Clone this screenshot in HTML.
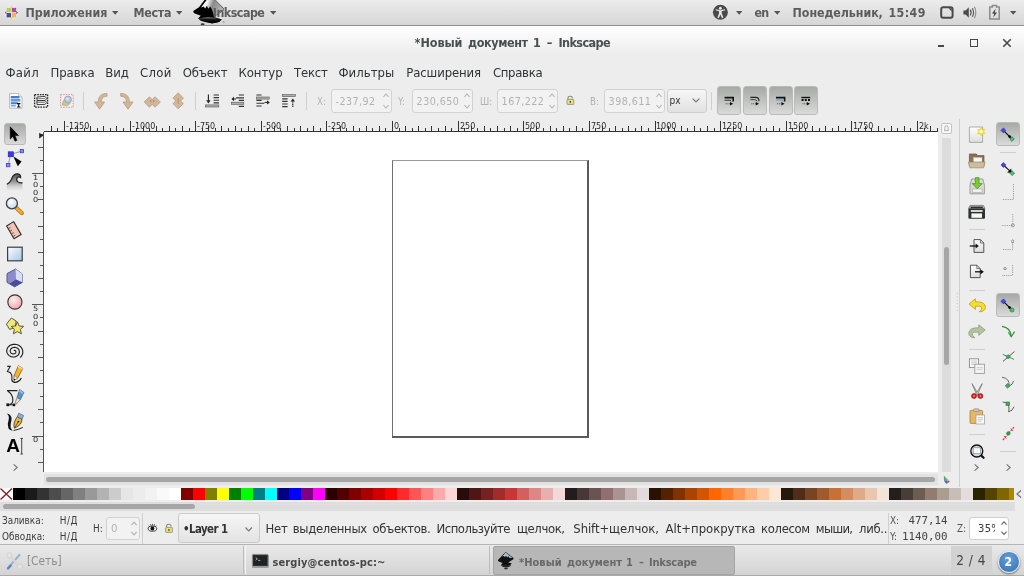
<!DOCTYPE html><html><head><meta charset="utf-8"><title>Inkscape</title><style>
*{box-sizing:border-box;margin:0;padding:0}
html,body{width:1024px;height:576px;overflow:hidden;background:#ededed;font-family:"DejaVu Sans Condensed","DejaVu Sans","Liberation Sans",sans-serif;font-size:13px;color:#2e3436}
.a{position:absolute}
.t{position:absolute;white-space:nowrap;line-height:1}
#panel{left:0;top:0;width:1024px;height:26px;background:linear-gradient(#ececec,#d6d6d6);border-bottom:1px solid #8e8e8e}
.pt{z-index:3;font-weight:bold;font-size:12.35px;color:#5c5c5c}
#title{left:0;top:26px;width:1024px;height:28px;background:linear-gradient(#ffffff,#ededed)}
.mi{font-size:13px;color:#2e3436;top:65.7px}
.sp{position:absolute;border:1px solid #d2d2d2;border-radius:3px;background:#f2f2f2;height:24px;top:89px}
.dim{color:#b2b2b2}
.tb{position:absolute;border-radius:3px;border:1px solid #b9bbb9;background:linear-gradient(#a6a9a6,#d9dad9)}
.sep{position:absolute;background:#cfcfcf}
.rl{position:absolute;font-family:"DejaVu Sans",sans-serif;font-size:8px;line-height:1;color:#2a2a2a;white-space:nowrap}
.sm{font-size:9.9px;color:#3c3c3c}
.mono{font-family:"DejaVu Sans Mono","Liberation Mono",monospace;font-size:10.8px;color:#444}
svg{position:absolute;overflow:visible}
</style></head><body><div id="root" style="position:absolute;left:0;top:0;width:1024px;height:576px;will-change:transform;filter:blur(0.4px)">
<div id="panel" class="a">
<div class="t pt" style="left:25.4px;top:7px">Приложения</div>
<svg style="left:111.6px;top:11px" width="6.4" height="3.8" viewBox="0 0 6.4 3.8"><path d="M0 0H6.4L3.2 3.8Z" fill="#555"/></svg>
<div class="t pt" style="left:133.5px;top:7px;letter-spacing:-0.3px">Места</div>
<svg style="left:176px;top:11px" width="6.4" height="3.8" viewBox="0 0 6.4 3.8"><path d="M0 0H6.4L3.2 3.8Z" fill="#555"/></svg>
<div class="t pt" style="left:212.8px;top:7px;letter-spacing:-0.5px">Inkscape</div>
<svg style="left:270.3px;top:11px" width="6.4" height="3.8" viewBox="0 0 6.4 3.8"><path d="M0 0H6.4L3.2 3.8Z" fill="#555"/></svg>
<div class="t pt" style="left:754.6px;top:7px;letter-spacing:-0.9px">en</div>
<svg style="left:736px;top:11px" width="6.4" height="3.8" viewBox="0 0 6.4 3.8"><path d="M0 0H6.4L3.2 3.8Z" fill="#555"/></svg>
<svg style="left:773.5px;top:11px" width="6.4" height="3.8" viewBox="0 0 6.4 3.8"><path d="M0 0H6.4L3.2 3.8Z" fill="#555"/></svg>
<svg style="left:1010px;top:11px" width="6.4" height="3.8" viewBox="0 0 6.4 3.8"><path d="M0 0H6.4L3.2 3.8Z" fill="#555"/></svg>
<div class="a pt" style="left:0;top:7px;width:1024px;height:16px;line-height:1"><span class="t" style="left:792.6px;top:0;letter-spacing:-0.07px">Понедельник,</span> <span class="t" style="left:888.4px;top:0;letter-spacing:0.43px">15:49</span></div>
</div>
<div id="title" class="a"></div>
<div class="a" style="left:0;top:37.4px;width:1024px;height:16px;font-weight:bold;font-size:12.5px;color:#46504f;line-height:1"><span class="t" style="left:414.6px;top:0;letter-spacing:-0.06px">*Новый</span> <span class="t" style="left:468px;top:0;letter-spacing:-0.41px">документ</span> <span class="t" style="left:533.1px;top:0;letter-spacing:0px">1</span> <span class="t" style="left:546.7px;top:0;letter-spacing:0px">–</span> <span class="t" style="left:558.5px;top:0;letter-spacing:-0.6px">Inkscape</span></div>
<div class="a" style="left:938px;top:45px;width:6px;height:2px;background:#3f4a4a"></div>
<div class="a" style="left:970px;top:39px;width:8px;height:8px;border:1.5px solid #3f4a4a"></div>
<svg style="left:1003px;top:39px" width="8" height="8" viewBox="0 0 8 8"><path d="M0.3 0.3L7.7 7.7M7.7 0.3L0.3 7.7" stroke="#3f4a4a" stroke-width="1.6" fill="none"/></svg>
<div class="t mi" style="left:5.5px;letter-spacing:0.3px">Файл</div>
<div class="t mi" style="left:50.6px;letter-spacing:-0.1px">Правка</div>
<div class="t mi" style="left:105.3px;letter-spacing:-0.1px">Вид</div>
<div class="t mi" style="left:140px;letter-spacing:0.3px">Слой</div>
<div class="t mi" style="left:182.7px;letter-spacing:-0.2px">Объект</div>
<div class="t mi" style="left:238.4px;letter-spacing:0px">Контур</div>
<div class="t mi" style="left:294px;letter-spacing:-0.2px">Текст</div>
<div class="t mi" style="left:338.4px;letter-spacing:0.05px">Фильтры</div>
<div class="t mi" style="left:406.2px;letter-spacing:-0.1px">Расширения</div>
<div class="t mi" style="left:492.9px;letter-spacing:-0.3px">Справка</div>
<div class="sep" style="left:83px;top:92px;width:1px;height:18px"></div>
<div class="sep" style="left:194.5px;top:92px;width:1px;height:18px"></div>
<div class="sep" style="left:305.6px;top:92px;width:1px;height:18px"></div>
<div class="sep" style="left:711px;top:92px;width:1px;height:18px"></div>
<div class="t dim" style="left:317px;top:97px;font-size:9.6px">X:</div>
<div class="sp" style="left:331px;width:61px;top:89px;height:24px;background:#f2f2f2"><div class="t" style="left:3.6px;top:6.6px;font-size:9.6px;color:#b2b2b2;font-family:'DejaVu Sans',sans-serif;letter-spacing:0.43px">-237,92</div><svg style="left:51.4px;top:0" width="6" height="24" viewBox="0 0 6 24"><path d="M0.4 7.0L3 4.0L5.6 7.0M0.4 15.000000000000002L3 18.0L5.6 15.000000000000002" stroke="#b2b2b2" stroke-width="1.1" fill="none"/></svg></div>
<div class="t dim" style="left:398px;top:97px;font-size:9.6px">Y:</div>
<div class="sp" style="left:412px;width:61px;top:89px;height:24px;background:#f2f2f2"><div class="t" style="left:3.6px;top:6.6px;font-size:9.6px;color:#b2b2b2;font-family:'DejaVu Sans',sans-serif;letter-spacing:0.43px">230,650</div><svg style="left:51.4px;top:0" width="6" height="24" viewBox="0 0 6 24"><path d="M0.4 7.0L3 4.0L5.6 7.0M0.4 15.000000000000002L3 18.0L5.6 15.000000000000002" stroke="#b2b2b2" stroke-width="1.1" fill="none"/></svg></div>
<div class="t dim" style="left:480px;top:97px;font-size:9.6px">Ш:</div>
<div class="sp" style="left:497px;width:61px;top:89px;height:24px;background:#f2f2f2"><div class="t" style="left:3.6px;top:6.6px;font-size:9.6px;color:#b2b2b2;font-family:'DejaVu Sans',sans-serif;letter-spacing:0.43px">167,222</div><svg style="left:51.4px;top:0" width="6" height="24" viewBox="0 0 6 24"><path d="M0.4 7.0L3 4.0L5.6 7.0M0.4 15.000000000000002L3 18.0L5.6 15.000000000000002" stroke="#b2b2b2" stroke-width="1.1" fill="none"/></svg></div>
<div class="t dim" style="left:590px;top:97px;font-size:9.6px">В:</div>
<div class="sp" style="left:604px;width:61px;top:89px;height:24px;background:#f2f2f2"><div class="t" style="left:3.6px;top:6.6px;font-size:9.6px;color:#b2b2b2;font-family:'DejaVu Sans',sans-serif;letter-spacing:0.43px">398,611</div><svg style="left:51.4px;top:0" width="6" height="24" viewBox="0 0 6 24"><path d="M0.4 7.0L3 4.0L5.6 7.0M0.4 15.000000000000002L3 18.0L5.6 15.000000000000002" stroke="#b2b2b2" stroke-width="1.1" fill="none"/></svg></div>
<div class="a" style="left:667px;top:89px;width:40px;height:24px;border:1px solid #cfcfcf;border-radius:3px;background:linear-gradient(#f6f6f6,#e2e2e2)"></div>
<div class="t" style="left:669.6px;top:96px;font-size:10px;color:#333">px</div>
<svg style="left:692px;top:98px" width="8" height="5" viewBox="0 0 8 5"><path d="M0.6 0.6L4 4L7.4 0.6" stroke="#777" stroke-width="1.2" fill="none"/></svg>
<div class="tb" style="left:717px;top:86px;width:24px;height:29px"></div>
<div class="tb" style="left:743px;top:86px;width:24px;height:29px"></div>
<div class="tb" style="left:769px;top:86px;width:24px;height:29px"></div>
<div class="tb" style="left:794px;top:86px;width:24px;height:29px"></div>
<div class="a" style="left:44px;top:132px;width:894px;height:340px;background:#fff"></div>
<div class="a" style="left:44px;top:131px;width:894px;height:1px;background:#333"></div>
<div class="a" style="left:43px;top:132px;width:1px;height:340px;background:#555"></div>
<svg style="left:0;top:0" width="1024" height="576" viewBox="0 0 1024 576" shape-rendering="crispEdges"><path d="M51.5 126V131M57.5 128V131M64.5 121V131M70.5 128V131M77.5 126V131M84.5 128V131M90.5 126V131M97.5 128V131M103.5 126V131M110.5 128V131M116.5 126V131M123.5 128V131M130.5 121V131M136.5 128V131M143.5 126V131M149.5 128V131M156.5 126V131M162.5 128V131M169.5 126V131M175.5 128V131M182.5 126V131M189.5 128V131M195.5 121V131M202.5 128V131M208.5 126V131M215.5 128V131M221.5 126V131M228.5 128V131M235.5 126V131M241.5 128V131M248.5 126V131M254.5 128V131M261.5 121V131M267.5 128V131M274.5 126V131M280.5 128V131M287.5 126V131M294.5 128V131M300.5 126V131M307.5 128V131M313.5 126V131M320.5 128V131M326.5 121V131M333.5 128V131M340.5 126V131M346.5 128V131M353.5 126V131M359.5 128V131M366.5 126V131M372.5 128V131M379.5 126V131M385.5 128V131M392.5 121V131M399.5 128V131M405.5 126V131M412.5 128V131M418.5 126V131M425.5 128V131M431.5 126V131M438.5 128V131M445.5 126V131M451.5 128V131M458.5 121V131M464.5 128V131M471.5 126V131M477.5 128V131M484.5 126V131M490.5 128V131M497.5 126V131M504.5 128V131M510.5 126V131M517.5 128V131M523.5 121V131M530.5 128V131M536.5 126V131M543.5 128V131M550.5 126V131M556.5 128V131M563.5 126V131M569.5 128V131M576.5 126V131M582.5 128V131M589.5 121V131M595.5 128V131M602.5 126V131M609.5 128V131M615.5 126V131M622.5 128V131M628.5 126V131M635.5 128V131M641.5 126V131M648.5 128V131M655.5 121V131M661.5 128V131M668.5 126V131M674.5 128V131M681.5 126V131M687.5 128V131M694.5 126V131M700.5 128V131M707.5 126V131M714.5 128V131M720.5 121V131M727.5 128V131M733.5 126V131M740.5 128V131M746.5 126V131M753.5 128V131M760.5 126V131M766.5 128V131M773.5 126V131M779.5 128V131M786.5 121V131M792.5 128V131M799.5 126V131M805.5 128V131M812.5 126V131M819.5 128V131M825.5 126V131M832.5 128V131M838.5 126V131M845.5 128V131M851.5 121V131M858.5 128V131M865.5 126V131M871.5 128V131M878.5 126V131M884.5 128V131M891.5 126V131M897.5 128V131M904.5 126V131M910.5 128V131M917.5 121V131M924.5 128V131M930.5 126V131M937.5 128V131" stroke="#333" stroke-width="1" fill="none"/><path d="M38 462.5H43M40 449.5H43M32 436.5H43M40 422.5H43M38 409.5H43M40 396.5H43M38 383.5H43M40 370.5H43M38 357.5H43M40 344.5H43M38 331.5H43M40 317.5H43M32 304.5H43M40 291.5H43M38 278.5H43M40 265.5H43M38 252.5H43M40 239.5H43M38 226.5H43M40 212.5H43M38 199.5H43M40 186.5H43M32 173.5H43M40 160.5H43M38 147.5H43M40 134.5H43" stroke="#555" stroke-width="1" fill="none"/></svg>
<div class="rl" style="left:66px;top:122.7px">-1250</div>
<div class="rl" style="left:132px;top:122.7px">-1000</div>
<div class="rl" style="left:197px;top:122.7px">-750</div>
<div class="rl" style="left:263px;top:122.7px">-500</div>
<div class="rl" style="left:328px;top:122.7px">-250</div>
<div class="rl" style="left:394px;top:122.7px">0</div>
<div class="rl" style="left:460px;top:122.7px">250</div>
<div class="rl" style="left:525px;top:122.7px">500</div>
<div class="rl" style="left:591px;top:122.7px">750</div>
<div class="rl" style="left:656px;top:122.7px">1000</div>
<div class="rl" style="left:722px;top:122.7px">1250</div>
<div class="rl" style="left:788px;top:122.7px">1500</div>
<div class="rl" style="left:853px;top:122.7px">1750</div>
<div class="rl" style="left:919px;top:122.7px">2k</div>
<div class="rl" style="left:33px;top:173.9px;font-size:7.2px;transform:scaleX(1.14);transform-origin:0 0">1</div>
<div class="rl" style="left:33px;top:181.3px;font-size:7.2px;transform:scaleX(1.14);transform-origin:0 0">0</div>
<div class="rl" style="left:33px;top:188.7px;font-size:7.2px;transform:scaleX(1.14);transform-origin:0 0">0</div>
<div class="rl" style="left:33px;top:196.1px;font-size:7.2px;transform:scaleX(1.14);transform-origin:0 0">0</div>
<div class="rl" style="left:33px;top:305.1px;font-size:7.2px;transform:scaleX(1.14);transform-origin:0 0">5</div>
<div class="rl" style="left:33px;top:312.5px;font-size:7.2px;transform:scaleX(1.14);transform-origin:0 0">0</div>
<div class="rl" style="left:33px;top:319.9px;font-size:7.2px;transform:scaleX(1.14);transform-origin:0 0">0</div>
<div class="rl" style="left:33px;top:436.4px;font-size:7.2px;transform:scaleX(1.14);transform-origin:0 0">0</div>
<div class="a" style="left:392px;top:160px;width:197px;height:278px;border-style:solid;border-width:1px 2px 2px 1px;border-color:#9a9a9a #5a5a5a #5a5a5a #6e6e6e"></div>
<div class="a" style="left:942px;top:138px;width:9px;height:334px;background:#dcdcdc"></div>
<div class="a" style="left:944px;top:247px;width:5px;height:118px;background:#a6a6a6;border-radius:2.5px"></div>
<div class="a" style="left:44px;top:474px;width:894px;height:11px;background:#e2e2e2"></div>
<div class="a" style="left:46px;top:477px;width:889px;height:5px;background:#a6a6a6;border-radius:2.5px"></div>
<div class="a" style="left:941px;top:123px;width:11px;height:11px;border:1px solid #c2c2c2;border-radius:2px;background:#f8f8f8"></div>
<div class="sep" style="left:959px;top:119px;width:1px;height:368px"></div>
<div class="tb" style="left:4px;top:123px;width:22px;height:22px"></div>
<div class="tb" style="left:996px;top:122px;width:24px;height:24px"></div>
<div class="tb" style="left:996px;top:293px;width:24px;height:24px"></div>
<div class="sep" style="left:969px;top:229px;width:16px;height:1px"></div>
<div class="sep" style="left:969px;top:290px;width:16px;height:1px"></div>
<div class="sep" style="left:969px;top:349px;width:16px;height:1px"></div>
<div class="sep" style="left:969px;top:434px;width:16px;height:1px"></div>
<div class="sep" style="left:1000px;top:152px;width:16px;height:1px"></div>
<div class="sep" style="left:1000px;top:451px;width:16px;height:1px"></div>
<svg style="left:12.5px;top:464px" width="5" height="7" viewBox="0 0 5 7"><path d="M0.6 0.4L4.2 3.5L0.6 6.6" stroke="#777" stroke-width="1.2" fill="none"/></svg>
<svg style="left:974px;top:464px" width="5" height="7" viewBox="0 0 5 7"><path d="M0.6 0.4L4.2 3.5L0.6 6.6" stroke="#777" stroke-width="1.2" fill="none"/></svg>
<svg style="left:1006px;top:464px" width="5" height="7" viewBox="0 0 5 7"><path d="M0.6 0.4L4.2 3.5L0.6 6.6" stroke="#777" stroke-width="1.2" fill="none"/></svg>
<div class="a" style="left:0;top:488px;width:1014px;height:12px;overflow:hidden;background:#fff">
<svg style="left:0;top:0" width="13" height="12" viewBox="0 0 13 12"><path d="M0.5 0.5L12 11.5M12 0.5L0.5 11.5" stroke="#8b1a1a" stroke-width="1.3" fill="none"/></svg>
<div class="a" style="left:13px;top:0;width:12px;height:12px;background:#000000"></div>
<div class="a" style="left:25px;top:0;width:12px;height:12px;background:#1a1a1a"></div>
<div class="a" style="left:37px;top:0;width:12px;height:12px;background:#333333"></div>
<div class="a" style="left:49px;top:0;width:12px;height:12px;background:#4d4d4d"></div>
<div class="a" style="left:61px;top:0;width:12px;height:12px;background:#666666"></div>
<div class="a" style="left:73px;top:0;width:12px;height:12px;background:#808080"></div>
<div class="a" style="left:85px;top:0;width:12px;height:12px;background:#999999"></div>
<div class="a" style="left:97px;top:0;width:12px;height:12px;background:#b3b3b3"></div>
<div class="a" style="left:109px;top:0;width:12px;height:12px;background:#cccccc"></div>
<div class="a" style="left:121px;top:0;width:12px;height:12px;background:#e6e6e6"></div>
<div class="a" style="left:133px;top:0;width:12px;height:12px;background:#ececec"></div>
<div class="a" style="left:145px;top:0;width:12px;height:12px;background:#f2f2f2"></div>
<div class="a" style="left:157px;top:0;width:12px;height:12px;background:#f9f9f9"></div>
<div class="a" style="left:169px;top:0;width:12px;height:12px;background:#ffffff"></div>
<div class="a" style="left:181px;top:0;width:12px;height:12px;background:#800000"></div>
<div class="a" style="left:193px;top:0;width:12px;height:12px;background:#ff0000"></div>
<div class="a" style="left:205px;top:0;width:12px;height:12px;background:#808000"></div>
<div class="a" style="left:217px;top:0;width:12px;height:12px;background:#ffff00"></div>
<div class="a" style="left:229px;top:0;width:12px;height:12px;background:#008000"></div>
<div class="a" style="left:241px;top:0;width:12px;height:12px;background:#00ff00"></div>
<div class="a" style="left:253px;top:0;width:12px;height:12px;background:#008080"></div>
<div class="a" style="left:265px;top:0;width:12px;height:12px;background:#00ffff"></div>
<div class="a" style="left:277px;top:0;width:12px;height:12px;background:#000080"></div>
<div class="a" style="left:289px;top:0;width:12px;height:12px;background:#0000ff"></div>
<div class="a" style="left:301px;top:0;width:12px;height:12px;background:#800080"></div>
<div class="a" style="left:313px;top:0;width:12px;height:12px;background:#ff00ff"></div>
<div class="a" style="left:325px;top:0;width:12px;height:12px;background:#2b0000"></div>
<div class="a" style="left:337px;top:0;width:12px;height:12px;background:#550000"></div>
<div class="a" style="left:349px;top:0;width:12px;height:12px;background:#800000"></div>
<div class="a" style="left:361px;top:0;width:12px;height:12px;background:#aa0000"></div>
<div class="a" style="left:373px;top:0;width:12px;height:12px;background:#d40000"></div>
<div class="a" style="left:385px;top:0;width:12px;height:12px;background:#ff0000"></div>
<div class="a" style="left:397px;top:0;width:12px;height:12px;background:#ff2a2a"></div>
<div class="a" style="left:409px;top:0;width:12px;height:12px;background:#ff5555"></div>
<div class="a" style="left:421px;top:0;width:12px;height:12px;background:#ff8080"></div>
<div class="a" style="left:433px;top:0;width:12px;height:12px;background:#ffaaaa"></div>
<div class="a" style="left:445px;top:0;width:12px;height:12px;background:#ffd5d5"></div>
<div class="a" style="left:457px;top:0;width:12px;height:12px;background:#280b0b"></div>
<div class="a" style="left:469px;top:0;width:12px;height:12px;background:#501616"></div>
<div class="a" style="left:481px;top:0;width:12px;height:12px;background:#782121"></div>
<div class="a" style="left:493px;top:0;width:12px;height:12px;background:#a02c2c"></div>
<div class="a" style="left:505px;top:0;width:12px;height:12px;background:#c83737"></div>
<div class="a" style="left:517px;top:0;width:12px;height:12px;background:#d35f5f"></div>
<div class="a" style="left:529px;top:0;width:12px;height:12px;background:#de8787"></div>
<div class="a" style="left:541px;top:0;width:12px;height:12px;background:#e9afaf"></div>
<div class="a" style="left:553px;top:0;width:12px;height:12px;background:#f4d7d7"></div>
<div class="a" style="left:565px;top:0;width:12px;height:12px;background:#241c1c"></div>
<div class="a" style="left:577px;top:0;width:12px;height:12px;background:#483737"></div>
<div class="a" style="left:589px;top:0;width:12px;height:12px;background:#6c5353"></div>
<div class="a" style="left:601px;top:0;width:12px;height:12px;background:#916f6f"></div>
<div class="a" style="left:613px;top:0;width:12px;height:12px;background:#ac9393"></div>
<div class="a" style="left:625px;top:0;width:12px;height:12px;background:#c8b7b7"></div>
<div class="a" style="left:637px;top:0;width:12px;height:12px;background:#e3dbdb"></div>
<div class="a" style="left:649px;top:0;width:12px;height:12px;background:#2b1100"></div>
<div class="a" style="left:661px;top:0;width:12px;height:12px;background:#552200"></div>
<div class="a" style="left:673px;top:0;width:12px;height:12px;background:#803300"></div>
<div class="a" style="left:685px;top:0;width:12px;height:12px;background:#aa4400"></div>
<div class="a" style="left:697px;top:0;width:12px;height:12px;background:#d45500"></div>
<div class="a" style="left:709px;top:0;width:12px;height:12px;background:#ff6600"></div>
<div class="a" style="left:721px;top:0;width:12px;height:12px;background:#ff7f2a"></div>
<div class="a" style="left:733px;top:0;width:12px;height:12px;background:#ff9955"></div>
<div class="a" style="left:745px;top:0;width:12px;height:12px;background:#ffb380"></div>
<div class="a" style="left:757px;top:0;width:12px;height:12px;background:#ffccaa"></div>
<div class="a" style="left:769px;top:0;width:12px;height:12px;background:#ffe6d5"></div>
<div class="a" style="left:781px;top:0;width:12px;height:12px;background:#28170b"></div>
<div class="a" style="left:793px;top:0;width:12px;height:12px;background:#502d16"></div>
<div class="a" style="left:805px;top:0;width:12px;height:12px;background:#784421"></div>
<div class="a" style="left:817px;top:0;width:12px;height:12px;background:#a05a2c"></div>
<div class="a" style="left:829px;top:0;width:12px;height:12px;background:#c87137"></div>
<div class="a" style="left:841px;top:0;width:12px;height:12px;background:#d38d5f"></div>
<div class="a" style="left:853px;top:0;width:12px;height:12px;background:#deaa87"></div>
<div class="a" style="left:865px;top:0;width:12px;height:12px;background:#e9c6af"></div>
<div class="a" style="left:877px;top:0;width:12px;height:12px;background:#f4e3d7"></div>
<div class="a" style="left:889px;top:0;width:12px;height:12px;background:#241f1c"></div>
<div class="a" style="left:901px;top:0;width:12px;height:12px;background:#483e37"></div>
<div class="a" style="left:913px;top:0;width:12px;height:12px;background:#6c5d53"></div>
<div class="a" style="left:925px;top:0;width:12px;height:12px;background:#917c6f"></div>
<div class="a" style="left:937px;top:0;width:12px;height:12px;background:#ac9d93"></div>
<div class="a" style="left:949px;top:0;width:12px;height:12px;background:#c8beb7"></div>
<div class="a" style="left:961px;top:0;width:12px;height:12px;background:#e3dedb"></div>
<div class="a" style="left:973px;top:0;width:12px;height:12px;background:#2b2200"></div>
<div class="a" style="left:985px;top:0;width:12px;height:12px;background:#554400"></div>
<div class="a" style="left:997px;top:0;width:12px;height:12px;background:#806600"></div>
<div class="a" style="left:1009px;top:0;width:12px;height:12px;background:#aa8800"></div>
<div class="a" style="left:1021px;top:0;width:12px;height:12px;background:#d4aa00"></div>
</div>
<svg style="left:1016px;top:490px" width="6" height="8" viewBox="0 0 6 8"><path d="M5 0.5L1 4L5 7.5" stroke="#777" stroke-width="1.3" fill="none"/></svg>
<div class="a" style="left:0;top:502px;width:1015px;height:9px;background:#dedede"></div>
<div class="a" style="left:3px;top:504px;width:192px;height:5px;background:#a6a6a6;border-radius:2.5px"></div>
<div class="t sm" style="left:2px;top:516px">Заливка:</div>
<div class="t sm" style="left:2px;top:532px">Обводка:</div>
<div class="t sm" style="left:59.7px;top:516px;letter-spacing:0.6px">Н/Д</div>
<div class="t sm" style="left:59.7px;top:532px;letter-spacing:0.6px">Н/Д</div>
<div class="t sm" style="left:93px;top:524px">H:</div>
<div class="sp" style="left:106px;width:34px;top:517px;height:23px;background:#f2f2f2"><div class="t" style="left:4px;top:5.8px;font-size:10.2px;color:#b2b2b2;font-family:'DejaVu Sans',sans-serif;letter-spacing:0.43px">0</div><svg style="left:24.4px;top:0" width="6" height="23" viewBox="0 0 6 23"><path d="M0.4 7.1L3 4.1L5.6 7.1M0.4 13.9L3 16.9L5.6 13.9" stroke="#b2b2b2" stroke-width="1.1" fill="none"/></svg></div>
<div class="sep" style="left:142px;top:513px;width:1px;height:31px"></div>
<div class="a" style="left:178px;top:513px;width:82px;height:30px;border:1px solid #cacaca;border-radius:3px;background:linear-gradient(#f6f6f6,#e3e3e3)"></div>
<div class="t" style="left:183px;top:523.7px;font-weight:bold;font-size:11.4px;letter-spacing:-0.55px;color:#333">•Layer 1</div>
<svg style="left:245px;top:526.5px" width="7.4" height="4.6" viewBox="0 0 7.4 4.6"><path d="M0.5 0.5L3.7 3.9L6.9 0.5" stroke="#777" stroke-width="1.2" fill="none"/></svg>
<div class="a" style="left:0;top:522.8px;width:888px;height:16px;font-size:12.96px;color:#333;line-height:1"><span class="t" style="left:265.6px;top:0;letter-spacing:-0.28px">Нет</span> <span class="t" style="left:292.8px;top:0;letter-spacing:-0.32px">выделенных</span> <span class="t" style="left:372.5px;top:0;letter-spacing:-0.38px">объектов.</span> <span class="t" style="left:436.6px;top:0;letter-spacing:-0.49px">Используйте</span> <span class="t" style="left:516.9px;top:0;letter-spacing:-0.37px">щелчок,</span> <span class="t" style="left:573.3px;top:0;letter-spacing:-0.07px">Shift+щелчок,</span> <span class="t" style="left:665.6px;top:0;letter-spacing:-0.02px">Alt+прокрутка</span> <span class="t" style="left:761px;top:0;letter-spacing:-0.33px">колесом</span> <span class="t" style="left:815.8px;top:0;letter-spacing:-0.67px">мыши,</span> <span class="t" style="left:859px;top:0;letter-spacing:-0.28px">либ..</span></div>
<div class="a" style="left:887.5px;top:513px;width:140px;height:31px;background:#ededed"></div>
<div class="sep" style="left:888px;top:513px;width:1px;height:31px"></div>
<div class="t sm" style="left:890px;top:516px;color:#555">X:</div>
<div class="t sm" style="left:890px;top:532px;color:#555">Y:</div>
<div class="t mono" style="left:908.5px;top:516px">477,14</div>
<div class="t mono" style="left:902px;top:531.6px">1140,00</div>
<div class="t sm" style="left:957px;top:524px;color:#555">Z:</div>
<div class="sp" style="left:969px;width:40px;top:517px;height:23px;background:#fff;border-color:#cfcfcf"></div>
<div class="a" style="left:970px;top:518px;width:24.6px;height:21px;overflow:hidden"><div class="t" style="left:8px;top:5.6px;font-size:10px;color:#3a3a3a;font-family:'DejaVu Sans',sans-serif;letter-spacing:0.3px">35%</div></div>
<svg style="left:1000.6px;top:517px" width="6" height="23" viewBox="0 0 6 23"><path d="M0.4 7.6L3 4.8L5.6 7.6M0.4 14.6L3 17.4L5.6 14.6" stroke="#666" stroke-width="1.1" fill="none"/></svg>
<div class="a" style="left:0;top:544px;width:1024px;height:32px;background:linear-gradient(#e9e9e9,#d4d4d4);border-top:1px solid #b4b4b4;border-bottom:1px solid #aaa"></div>
<div class="a" style="left:243px;top:546px;width:1px;height:28px;background:#bdbdbd"></div>
<div class="a" style="left:245px;top:546px;width:1px;height:28px;background:#f4f4f4"></div>
<div class="a" style="left:489px;top:546px;width:1px;height:28px;background:#bdbdbd"></div>
<div class="a" style="left:493px;top:546px;width:242px;height:29px;background:#b7b7b7;border:1px solid #a4a4a4;border-radius:2px"></div>
<div class="t" style="left:26.9px;top:556.2px;font-size:11.8px;letter-spacing:0px;color:#8c8c8c">[Сеть]</div>
<div class="t" style="left:272.4px;top:556.6px;font-weight:bold;font-size:11px;letter-spacing:0.13px;color:#484848">sergiy@centos-pc:~</div>
<div class="a" style="left:0;top:556.9px;width:1024px;height:16px;font-weight:bold;font-size:11px;color:#686868;line-height:1"><span class="t" style="left:518.9px;top:0;letter-spacing:0.07px">*Новый</span> <span class="t" style="left:567px;top:0;letter-spacing:-0.04px">документ</span> <span class="t" style="left:625.9px;top:0;letter-spacing:0px">1</span> <span class="t" style="left:639.0px;top:0;letter-spacing:0px">–</span> <span class="t" style="left:649px;top:0;letter-spacing:-0.21px">Inkscape</span></div>
<div class="a" style="left:951px;top:546px;width:41px;height:28px;background:#d2d2d2"></div>
<div class="t" style="left:956.2px;top:554px;font-size:13.5px;word-spacing:1px;color:#444">2 / 4</div>
<div class="a" style="left:997.6px;top:550.6px;width:22px;height:22px;border-radius:50%;background:radial-gradient(circle at 50% 35%,#6a9fd8,#2f6fb5);border:1.5px solid #e8eef5;box-shadow:0 1px 2px rgba(0,0,0,.5)"></div>
<div class="t" style="left:1004.5px;top:555.5px;font-weight:bold;font-size:12px;color:#fff">2</div>
<svg style="left:0;top:0;pointer-events:none" width="1024" height="576" viewBox="0 0 1024 576"><defs>
<linearGradient id="gSnow" x1="0" y1="0" x2="1" y2="0.25"><stop offset="0" stop-color="#fff"/><stop offset="0.3" stop-color="#f0f0f0"/><stop offset="0.55" stop-color="#8a8a8a"/><stop offset="1" stop-color="#b4b4b4"/></linearGradient>
<linearGradient id="gPool" x1="0" y1="0" x2="0" y2="1"><stop offset="0" stop-color="#777"/><stop offset="0.45" stop-color="#111"/><stop offset="1" stop-color="#000"/></linearGradient>
<linearGradient id="gRect" x1="0" y1="0" x2="1" y2="1"><stop offset="0" stop-color="#fdfeff"/><stop offset="1" stop-color="#a8c6e6"/></linearGradient>
<radialGradient id="gCirc" cx="0.4" cy="0.35" r="0.7"><stop offset="0" stop-color="#fff0f0"/><stop offset="1" stop-color="#f0a0aa"/></radialGradient>
<radialGradient id="gLens" cx="0.4" cy="0.35" r="0.7"><stop offset="0" stop-color="#ffffff"/><stop offset="1" stop-color="#c4d6ea"/></radialGradient>
<linearGradient id="gWave" x1="0" y1="0" x2="0" y2="1"><stop offset="0" stop-color="#555"/><stop offset="0.5" stop-color="#999"/><stop offset="1" stop-color="#ccc" stop-opacity="0.2"/></linearGradient>
<linearGradient id="gPage" x1="0" y1="0" x2="0" y2="1"><stop offset="0" stop-color="#fff"/><stop offset="1" stop-color="#dcdcdc"/></linearGradient>
</defs><g opacity="0.88"><circle cx="11.3" cy="12.6" r="6.8" fill="#fff" opacity="0.45"/><rect x="6.6" y="7.8" width="4.4" height="4.4" fill="#a4d444"/><rect x="11.8" y="7.8" width="4.4" height="4.4" fill="#b02f9a"/><rect x="6.6" y="13" width="4.4" height="4.4" fill="#36368c"/><rect x="11.8" y="13" width="4.4" height="4.4" fill="#f0b040"/><path d="M11.4 5.8L13 7.6H9.8Z" fill="#f0c050"/><path d="M11.4 19.4L13 17.6H9.8Z" fill="#a4d444"/><path d="M4.8 12.6L6.4 11V14.2Z" fill="#7a3a9a"/><path d="M18 12.6L16.4 11V14.2Z" fill="#36368c"/></g><g><path d="M204.5 0L199 7.2L193.6 10.8Q192.6 12.2 194.2 13.2L200.8 15.8L198 18.4L206 21.6L212 23.4L219 22L222 19.6L214 17L223.8 10.2Q224.4 9 223.4 8L215.6 0Z" fill="#000"/><path d="M206.6 0L201 7.6L203.6 6.6L205.2 8.4L206.8 5.8L208.4 8.8L210.2 6.4L212 9.6L213 12.4L214.2 16.6L223.4 10.2Q224.2 9.4 223.4 8.4L215.4 0Z" fill="url(#gSnow)"/><path d="M199 18.4Q206 16 214 17.4Q221.6 19.4 219.6 21.8Q212 24.4 205 22Q198.6 20.6 199 18.4Z" fill="url(#gPool)"/><ellipse cx="202.6" cy="24.2" rx="2" ry="0.9" fill="#333"/><ellipse cx="223.6" cy="22" rx="1.2" ry="0.7" fill="#999"/></g><circle cx="720.4" cy="12.3" r="7.5" fill="#4a4a4a"/><circle cx="720.4" cy="8.2" r="1.5" fill="#e4e4e4"/><path d="M715.6 10.3L719 11.2V13.6L717.4 17.6L718.8 18.2L720.4 14.6L722 18.2L723.4 17.6L721.8 13.6V11.2L725.2 10.3L724.9 9.2L720.4 10.2L715.9 9.2Z" fill="#e4e4e4"/><rect x="941.2" y="7.2" width="11.4" height="10.6" rx="2" fill="none" stroke="#4a4a4a" stroke-width="2"/><path d="M948.5 8.2H951.6V11.4Z" fill="#4a4a4a"/><path d="M963.4 10.4H965.6L968.8 7.2V17.8L965.6 14.6H963.4Z" fill="#4a4a4a"/><path d="M970.4 9.6Q971.8 12.5 970.4 15.4" stroke="#4a4a4a" stroke-width="1.3" fill="none"/><path d="M972.4 8.2Q974.6 12.5 972.4 16.8" stroke="#5e5e5e" stroke-width="1.2" fill="none"/><path d="M974.4 6.8Q977.4 12.5 974.4 18.2" stroke="#8e8e8e" stroke-width="1.1" fill="none"/><path d="M992.4 5.6H996.6V7H999.2V19H989.8V7H992.4Z" fill="none" stroke="#8c8c8c" stroke-width="1.5"/><path d="M995.8 8.6L992 13.4H994.4L993.2 17.4L997 12.4H994.6Z" fill="#3c3c3c"/><path d="M9.6 93.6H18.6L22 97V108.2H9.6Z" fill="#fff" stroke="#aeb2b6" stroke-width="0.9"/><path d="M18.6 93.6V97H22" fill="#e4e8ec" stroke="#aeb2b6" stroke-width="0.7"/><rect x="10.8" y="96" width="8.6" height="2.4" fill="#4a7ec4"/><rect x="10.8" y="99" width="9.6" height="2.6" fill="#6c9cd8"/><rect x="10.8" y="102.2" width="7" height="2" fill="#4a7ec4"/><rect x="10.8" y="104.8" width="5" height="1.8" fill="#7aaae0"/><path d="M17 103.6H20.4M17 107H20.4M18.7 103.6V107" stroke="#111" stroke-width="1.1"/><rect x="34.6" y="94.6" width="13" height="12.6" fill="none" stroke="#222" stroke-width="1.3" stroke-dasharray="1.6 1"/><path d="M37 97L45 96.4L46.6 98.6L45 100.6H37ZM37 100.6H45L46.6 102.4L45 104.4L37 104.6Z" fill="#f4f4f4" stroke="#333" stroke-width="0.9"/><path d="M36.4 98.6H45M36.4 102.4H45" stroke="#555" stroke-width="0.7"/><rect x="60.6" y="94.6" width="12.6" height="12.6" fill="#f3efec" stroke="#dc8898" stroke-width="0.95" stroke-dasharray="1.5 1.1"/><path d="M62 104.8L63.6 100.4L67.6 99.6L70 103.6L67 105.8Z" fill="#c6cc88" stroke="#a0a070" stroke-width="0.6"/><circle cx="68" cy="99.6" r="3.5" fill="#b8c8d8" stroke="#98a4b0" stroke-width="0.9"/><circle cx="67.4" cy="98.8" r="1.4" fill="#dce8f2"/><path d="M107 93.4Q98.2 93.4 98.2 102H94.6L99.6 109.2L104.6 102H101.2Q101.2 96.4 107 96.2Z" fill="#d2b69a" stroke="#b89a7e" stroke-width="0.8" stroke-linejoin="round"/><path d="M120.6 93.4Q129.4 93.4 129.4 102H133L128 109.2L123 102H126.4Q126.4 96.4 120.6 96.2Z" fill="#d2b69a" stroke="#b89a7e" stroke-width="0.8" stroke-linejoin="round"/><path d="M144.2 102L149.4 96.8L152.2 99.6L155 96.8L160.4 102L155 107.2L152.2 104.4L149.4 107.2Z" fill="#d2b69a" stroke="#b89a7e" stroke-width="0.8" stroke-linejoin="round"/><path d="M149.6 101.2L151.4 102.6V99.8ZM154.8 101.2L153 102.6V99.8Z" fill="#ad8e70"/><path d="M178.2 92.8L183.4 98.2L180.6 101L183.4 103.6L178.2 108.8L173 103.6L175.8 101L173 98.2Z" fill="#d2b69a" stroke="#b89a7e" stroke-width="0.8" stroke-linejoin="round"/><path d="M178.2 98V104" stroke="#ad8e70" stroke-width="0.9"/><path d="M213.6 95H219M213.6 97.6H219M213.6 100.2H219M213.6 102.8H219" stroke="#333" stroke-width="1.15" stroke-dasharray="3.6 0"/><rect x="205.6" y="104.9" width="13.2" height="2.1" fill="#b0b0a0" stroke="#555" stroke-width="0.6"/><path d="M208.4 94.4V101" stroke="#222" stroke-width="1.1"/><path d="M206.2 100.2H210.6L208.4 103.4Z" fill="#222"/><path d="M238.8 95H244M236 97.8H244M238.8 100.4H244M238.8 106.4H244" stroke="#333" stroke-width="1.15"/><rect x="231.4" y="102.2" width="12.4" height="2.1" fill="#b0b0a0" stroke="#555" stroke-width="0.6"/><path d="M231.4 99L234 96.8V101.2Z" fill="#222"/><path d="M234 99H236" stroke="#222" stroke-width="1"/><path d="M256.4 95H261.6M256.4 100.4H261.6M256.4 103.2H264.4M256.4 106H261.6" stroke="#333" stroke-width="1.15"/><rect x="256.6" y="97" width="12.6" height="2.1" fill="#b0b0a0" stroke="#555" stroke-width="0.6"/><path d="M269.8 102.4L267 100.2V104.6Z" fill="#222"/><path d="M264.6 102.4H267" stroke="#222" stroke-width="1"/><path d="M282.2 98.8H287.6M282.2 101.4H287.6M282.2 104H287.6M282.2 106.6H287.6" stroke="#333" stroke-width="1.15"/><rect x="282.4" y="94.6" width="13" height="2" fill="#b0b0a0" stroke="#555" stroke-width="0.6"/><path d="M292.8 107V101" stroke="#222" stroke-width="1.1" stroke-dasharray="1.2 0.6"/><path d="M290.6 101.6H295L292.8 98.4Z" fill="#222"/><g transform="translate(566.4 95.6) scale(1.0)"><path d="M1.6 4V2.6Q1.6 0.6 3.8 0.6Q6 0.6 6 2.6V3" fill="none" stroke="#8a8a70" stroke-width="1.1"/><rect x="0.6" y="3.8" width="6.8" height="5" rx="0.6" fill="#e6e088" stroke="#8c8c6c" stroke-width="0.8"/><rect x="3.2" y="5.4" width="1.4" height="1.8" fill="#5a5020"/></g><g transform="translate(724.6 96.8)"><path d="M0 0.8H8.6V4.6" fill="none" stroke="#111" stroke-width="1.6"/><path d="M0 3.4H6V4.6" fill="none" stroke="#333" stroke-width="1"/><path d="M1 7H5.4" stroke="#444" stroke-width="0.9" stroke-dasharray="1 0.8"/><path d="M5.4 5.2V8.8L8.6 7Z" fill="#111"/></g><g transform="translate(750.4 96.8)"><path d="M0 0.6H5.4Q8.6 0.6 8.6 4.4" fill="none" stroke="#222" stroke-width="1.1"/><path d="M0 2.8H4.4Q6.4 2.8 6.4 4.6" fill="none" stroke="#333" stroke-width="0.9"/><path d="M1 7H5.4" stroke="#444" stroke-width="0.9" stroke-dasharray="1 0.8"/><path d="M5.4 5.2V8.8L8.6 7Z" fill="#111"/></g><g transform="translate(776 96.8)"><path d="M0 0.8H8.6V4.6" fill="none" stroke="#111" stroke-width="1.6"/><path d="M0 3.2H6.2V4.6" fill="none" stroke="#6a9ad8" stroke-width="1.2"/><path d="M1 7H5.4" stroke="#444" stroke-width="0.9" stroke-dasharray="1 0.8"/><path d="M5.4 5.2V8.8L8.6 7Z" fill="#111"/></g><g transform="translate(801.4 96.8)"><path d="M0 0.7H8.8" stroke="#111" stroke-width="1.4"/><path d="M0.2 3.2H8.8" stroke="#111" stroke-width="1.8" stroke-dasharray="2 1.2"/><path d="M1 7H5.4" stroke="#444" stroke-width="0.9" stroke-dasharray="1 0.8"/><path d="M5.4 5.2V8.8L8.6 7Z" fill="#111"/></g><path d="M10.2 126.8V139L12.9 136.4L15 141.2L17 140.3L14.9 135.6H18.6Z" fill="#000" stroke="#000" stroke-width="0.5" stroke-linejoin="round"/><path d="M10.8 154.2L21.8 151.2M10.8 154.2L8.2 165" stroke="#8a8aa0" stroke-width="0.9"/><rect x="8.2" y="151.8" width="5.2" height="5" fill="#3a3ae0" stroke="#2020b0" stroke-width="0.6"/><rect x="20.2" y="149.4" width="3.4" height="3.4" fill="#8a8af0" stroke="#3030d0" stroke-width="0.7"/><rect x="6.5" y="163.4" width="3.4" height="3.4" fill="#8a8af0" stroke="#3030d0" stroke-width="0.7"/><path d="M13.4 156.4L21.6 161.6L17.8 166.2Z" fill="#000"/><path d="M6.8 184.2Q10.4 182.6 12 178Q13.6 173.6 17.6 173.8Q21 174.4 20.6 177.6Q19 176.2 17.4 177.4Q15.8 179.4 17.6 181.6Q19.6 183.4 22.4 182.6V190H6.8Z" fill="url(#gWave)"/><path d="M6.8 184.2Q10.4 182.6 12 178Q13.6 173.6 17.6 173.8Q21 174.4 20.6 177.6Q19 176.2 17.4 177.4Q15.8 179.4 17.6 181.6Q19.6 183.4 22.4 182.6" fill="none" stroke="#222" stroke-width="1.2"/><path d="M16.4 208L21.8 213" stroke="#b87818" stroke-width="4.2" stroke-linecap="round"/><path d="M16.6 208.2L21.6 212.8" stroke="#f4ac28" stroke-width="2.6" stroke-linecap="round"/><circle cx="11.9" cy="203.4" r="5.5" fill="url(#gLens)" stroke="#3a3f44" stroke-width="1.3"/><path d="M6.6 226L13.6 221.6L21.2 234.6L14 238.8Z" fill="#f2c4b2" stroke="#3a3030" stroke-width="1.1" stroke-linejoin="round"/><path d="M8.4 228.6L10.4 227.4M10 231.2L12 230M11.6 233.8L13.6 232.6M13.2 236.4L15.2 235.2" stroke="#3a3030" stroke-width="0.8"/><rect x="7.6" y="247.2" width="14.6" height="13.6" fill="url(#gRect)" stroke="#3a3f44" stroke-width="1.2"/><path d="M15.6 269L22.4 274V282.4L14.6 286.8L7 282.4V273.6Z" fill="#8c8ccc" stroke="#50507a" stroke-width="0.9" stroke-linejoin="round"/><path d="M15.6 269L22.4 274V282.4L16 279.4Z" fill="#dcdcf4"/><path d="M16 279.4L22.4 282.4L14.6 286.8L9.4 283.8Z" fill="#4c4c9c"/><circle cx="14.9" cy="302" r="7.1" fill="url(#gCirc)" stroke="#3a3034" stroke-width="1.1"/><path d="M11.4 318L16.2 321L15.2 327.4L9.6 329.4L6.4 324.2Z" fill="#f0e87c" stroke="#4a4a30" stroke-width="0.9" stroke-linejoin="round"/><path d="M17.4 321.8L19.2 326L23.6 326.4L20.4 329.4L21.4 333.8L17.4 331.6L13.4 333.8L14.4 329.4L11.2 326.4L15.6 326Z" fill="#f4e470" stroke="#4a4a30" stroke-width="0.9" stroke-linejoin="round"/><path d="M13.8 350.5L14.0 350.4L14.2 350.4L14.5 350.4L14.8 350.4L15.0 350.5L15.3 350.7L15.5 350.9L15.7 351.1L15.8 351.4L15.9 351.8L15.9 352.1L15.8 352.5L15.6 352.9L15.3 353.2L14.9 353.5L14.5 353.7L14.0 353.8L13.5 353.9L12.9 353.9L12.3 353.8L11.8 353.5L11.3 353.2L10.9 352.8L10.5 352.3L10.3 351.7L10.2 351.1L10.2 350.5L10.4 349.9L10.7 349.2L11.1 348.7L11.7 348.2L12.4 347.8L13.2 347.5L14.0 347.4L14.9 347.4L15.8 347.5L16.6 347.8L17.4 348.3L18.1 348.8L18.7 349.5L19.1 350.3L19.3 351.2L19.4 352.1L19.2 353.0L18.9 353.9L18.3 354.8L17.6 355.5L16.7 356.1L15.7 356.6L14.6 356.9L13.4 357.0L12.2 356.9L11.0 356.6L9.9 356.1L8.9 355.4L8.0 354.5L7.4 353.5L6.9 352.4L6.7 351.3L6.8 350.1L7.1 348.9L7.6 347.7L8.5 346.7L9.5 345.8L10.7 345.1L12.1 344.6L13.6 344.3L15.1 344.3L16.6 344.5L18.1 345.0L19.4 345.8L20.6 346.7L21.6 347.9L22.3 349.2L22.7 350.6L22.8 352.1L22.7 353.5L22.1 355.0L21.3 356.3L20.2 357.5" fill="none" stroke="#222" stroke-width="1.15"/><path d="M7.2 366.4H10.2L7.4 371.4Q10.8 372.2 11.6 374.6Q12.2 377 11.8 380Q12.6 382.6 16 382.4Q19.6 381.6 21.4 378" fill="none" stroke="#222" stroke-width="1.1"/><path d="M18.4 365.6L22.8 368.4L17.8 378L14 380.4L14.2 375.4Z" fill="#f4b432" stroke="#6a5020" stroke-width="0.7" stroke-linejoin="round"/><path d="M14.2 375.4L17.8 378L14 380.4Z" fill="#fff4d8" stroke="#6a5020" stroke-width="0.5"/><path d="M14 380.4L14.1 378.6L15.4 379.5Z" fill="#111"/><path d="M18.4 365.6L22.8 368.4L22 369.8L17.7 367Z" fill="#fbe08a"/><path d="M7 390.6H17.4M7.6 390.8Q13.6 395.4 12.8 401Q12.6 403.6 9.6 404.6" fill="none" stroke="#222" stroke-width="1.1"/><rect x="6.4" y="403.4" width="2.8" height="2.8" fill="#111"/><rect x="12.6" y="403.6" width="2.6" height="2.6" fill="#111"/><path d="M9 404.8H12.6" stroke="#111" stroke-width="0.9"/><path d="M19.6 389.6L23.8 392.4L20.4 399.6L17 397.6Z" fill="#5e94cc" stroke="#34506e" stroke-width="0.7"/><path d="M17 397.6L20.4 399.6L17.8 402.6L15.8 404.4L15.6 401.4Z" fill="#e8e0cc" stroke="#555" stroke-width="0.6"/><path d="M19.8 390L23.4 392.4L22.6 394L19 391.6Z" fill="#9cc4e8"/><path d="M6.6 413.4Q12.4 414.2 11.4 420.4Q10.2 424.6 10.6 427.4Q11.4 430 13.6 430.4Q10 431 8.4 428.2Q7 424.4 8.6 420Q9.8 415.6 6.6 413.4Z" fill="#111"/><path d="M13.6 430.4Q18 430 22.8 427.4" fill="none" stroke="#222" stroke-width="1"/><path d="M17.4 416.6L22 419.2Q22 425 14.4 428.2Q12.6 423 17.4 416.6Z" fill="#e4b848" stroke="#3a2c10" stroke-width="0.8"/><path d="M18.8 413.2L23.6 415.6L22 419.2L17.4 416.6Z" fill="#86b4dc" stroke="#34506e" stroke-width="0.6"/><path d="M14.6 427.8L18.4 421.6" stroke="#3a2c10" stroke-width="0.7"/><circle cx="18.4" cy="421.6" r="0.9" fill="#3a2c10"/><path d="M20.4 438.4H23M20.4 454H23M21.7 438.4V454" stroke="#333" stroke-width="0.9" fill="none"/><path d="M969.4 127H982.6V142.4H969.4Z" fill="url(#gPage)" stroke="#a4a4a4" stroke-width="0.9"/><path d="M981 127.2L982.2 129.4L984.7 129.2L983.8 131.5L985 133.6L982.6 133.8L981.4 136L980 133.9L977.5 134L978.7 131.7L977.6 129.5L980 129.4Z" fill="#f4e040" stroke="#e8cc28" stroke-width="0.5"/><circle cx="981.2" cy="131.6" r="1.7" fill="#fffbe0"/><path d="M969.4 154H976.4L977.4 155.6H984V166H969.4Z" fill="#8c7252" stroke="#6a5438" stroke-width="0.7"/><rect x="973.4" y="157.4" width="8.6" height="6.6" fill="#f6f6f6" stroke="#b0b0b0" stroke-width="0.5"/><path d="M968.4 162H985L983.6 167.8H969.8Z" fill="#cdbc9e" stroke="#9a8664" stroke-width="0.7"/><path d="M971.6 179H982.8L984.4 185V193.8H970V185Z" fill="#d8dad6" stroke="#8c8e8a" stroke-width="0.8"/><rect x="972.4" y="189" width="9.6" height="3.2" fill="#f4f4f4" stroke="#9a9a9a" stroke-width="0.5"/><path d="M975.4 177.6H979V183.6H982.2L977.2 188.8L972.2 183.6H975.4Z" fill="#7cc83a" stroke="#4e9a1e" stroke-width="0.8" stroke-linejoin="round"/><path d="M970 205.4H983.4L985 208.6H968.4Z" fill="#b8bab6" stroke="#555" stroke-width="0.6"/><rect x="968.4" y="208.4" width="16.6" height="10.4" rx="1" fill="#2e3032"/><rect x="970.6" y="206.6" width="12.2" height="1.6" fill="#2e3032"/><rect x="970.8" y="210" width="11.8" height="2" fill="#d4d6d2"/><rect x="971.4" y="213.4" width="10.6" height="4.4" fill="#f8f8f0"/><path d="M974 239.6H980.4L983.8 243V252.4H974Z" fill="url(#gPage)" stroke="#444" stroke-width="0.9"/><path d="M980.4 239.6V243H983.8" fill="none" stroke="#444" stroke-width="0.7"/><path d="M969.8 246H976" stroke="#111" stroke-width="1.3"/><path d="M975.6 243.4L978.8 246L975.6 248.6Z" fill="#111"/><path d="M970.4 265.2H976.8L980.2 268.6V277.6H970.4Z" fill="url(#gPage)" stroke="#444" stroke-width="0.9"/><path d="M976.8 265.2V268.6H980.2" fill="none" stroke="#444" stroke-width="0.7"/><path d="M975 271.8H981" stroke="#111" stroke-width="1.3"/><path d="M980.4 269.2L983.8 271.8L980.4 274.4Z" fill="#111"/><path d="M969 304L975.4 298.8V301.8Q985.4 301.4 985.4 307.4Q985.2 311.6 979.4 311.8Q982.4 309.8 981.8 307.4Q981 305.8 975.4 306.2V309.4Z" fill="#f6dc3a" stroke="#c8a800" stroke-width="0.9" stroke-linejoin="round"/><path d="M985.2 330L978.8 324.8V327.8Q968.8 327.4 968.8 333.4Q969 337.6 974.8 337.8Q971.8 335.8 972.4 333.4Q973.2 331.8 978.8 332.2V335.4Z" fill="#b4c2a0" stroke="#94a482" stroke-width="0.9" stroke-linejoin="round"/><rect x="969.4" y="358.8" width="9.2" height="8.6" fill="#fbfbfb" stroke="#8a8a8a" stroke-width="0.9"/><path d="M971 361H977M971 362.8H977M971 364.6H975" stroke="#b4b4b4" stroke-width="0.7"/><rect x="974.8" y="364.2" width="9.6" height="9.2" fill="#f4f4f4" stroke="#9a9a9a" stroke-width="0.9"/><path d="M976.6 367.6H982.6M976.6 369.4H982.6" stroke="#c0c0c0" stroke-width="0.7"/><path d="M972 383.6L978.6 394.6L977 395.4Z" fill="#e8e8e8" stroke="#666" stroke-width="0.7"/><path d="M982.2 383.6L975.6 394.6L977.2 395.4Z" fill="#e8e8e8" stroke="#666" stroke-width="0.7"/><circle cx="974" cy="396" r="2.5" fill="#d82424" stroke="#9a1010" stroke-width="0.6"/><circle cx="980.4" cy="396" r="2.5" fill="#d82424" stroke="#9a1010" stroke-width="0.6"/><circle cx="974" cy="396" r="0.8" fill="#f0b0b0"/><circle cx="980.4" cy="396" r="0.8" fill="#f0b0b0"/><rect x="970" y="410.4" width="12.6" height="13" rx="0.8" fill="#e6b864" stroke="#a8823c" stroke-width="0.8"/><rect x="973.6" y="408.8" width="5.4" height="2.8" rx="0.6" fill="#c4c4c4" stroke="#888" stroke-width="0.6"/><rect x="976" y="415" width="8.6" height="9" fill="#fafafa" stroke="#9a9a9a" stroke-width="0.7"/><path d="M977.6 417.6H983M977.6 419.4H983M977.6 421.2H981.6" stroke="#b4b4b4" stroke-width="0.7"/><path d="M981 455.4L983.6 457.8" stroke="#111" stroke-width="2.2" stroke-linecap="round"/><circle cx="976.8" cy="451" r="6" fill="#cfe0f2" stroke="#111" stroke-width="1.3"/><rect x="973.2" y="447.8" width="7.4" height="6" fill="#fff" stroke="#7a8088" stroke-width="0.7"/><path d="M1003.4 130.4L1012 139" stroke="#111" stroke-width="1.1"/><circle cx="1009.592" cy="136.592" r="1.3" fill="#000"/><path d="M1003.4 128.0L1005.8 130.4L1003.4 132.8L1001.0 130.4Z" fill="#4a4af0" stroke="#1c1cb0" stroke-width="0.7"/><path d="M1012 136.6L1014.4 139L1012 141.4L1009.6 139Z" fill="#5aba7a" stroke="#1e7a3a" stroke-width="0.7"/><path d="M1003.4 165L1012.2 173.2" stroke="#111" stroke-width="1.1"/><path d="M1011.184 168.376L1011.784 172.976L1007.184 172.376Z" fill="#111"/><path d="M1003.4 162.6L1005.8 165L1003.4 167.4L1001.0 165Z" fill="#4a4af0" stroke="#1c1cb0" stroke-width="0.7"/><path d="M1012.2 170.79999999999998L1014.6 173.2L1012.2 175.6L1009.8000000000001 173.2Z" fill="#5aba7a" stroke="#1e7a3a" stroke-width="0.7"/><path d="M1013.5 184V199.5H1002" stroke="#8c8c8c" stroke-width="0.9" stroke-dasharray="0.9 0.9" fill="none"/><path d="M1012.8 214V225.5H1001" stroke="#8c8c8c" stroke-width="0.9" stroke-dasharray="0.9 0.9" fill="none"/><circle cx="1012.8" cy="225.4" r="1.5" fill="none" stroke="#777" stroke-width="0.7"/><path d="M1012.6 242V249.5H1002" stroke="#8c8c8c" stroke-width="0.9" stroke-dasharray="0.9 0.9" fill="none"/><ellipse cx="1012.6" cy="241.4" rx="1" ry="1.6" fill="none" stroke="#777" stroke-width="0.7"/><path d="M1012.6 265V275.5H1002" stroke="#8c8c8c" stroke-width="0.9" stroke-dasharray="0.9 0.9" fill="none"/><ellipse cx="1005" cy="268.6" rx="1.3" ry="1" fill="none" stroke="#666" stroke-width="0.7"/><path d="M1003.4 301.4L1012 310" stroke="#111" stroke-width="1.1"/><circle cx="1009.592" cy="307.592" r="1.3" fill="#000"/><path d="M1003.4 299.0L1005.8 301.4L1003.4 303.79999999999995L1001.0 301.4Z" fill="#4a4af0" stroke="#1c1cb0" stroke-width="0.7"/><circle cx="1012" cy="310" r="2" fill="#5aba7a" stroke="#1e7a3a" stroke-width="0.7"/><path d="M1002 326.4Q1010.6 327.6 1011.2 336.4" fill="none" stroke="#2a8c2e" stroke-width="1.2"/><path d="M1008.4 332.2L1011.2 336.8L1014.6 331.6" fill="none" stroke="#2a8c2e" stroke-width="1.1"/><path d="M1003 361.4L1014.4 351.6" stroke="#444" stroke-width="0.9"/><path d="M1002.8 354.4L1014 359.4" stroke="#2a8c2e" stroke-width="0.9"/><path d="M1008.2 354.6L1010.4 356.8L1008.2 359L1006 356.8Z" fill="#4aa860" stroke="#1e7a3a" stroke-width="0.6"/><path d="M1002 377.2Q1010 378.6 1009 385.6M1009 386Q1012.8 385 1013.6 380.8" fill="none" stroke="#555" stroke-width="0.9"/><path d="M1007.6 383.4L1010 385.8L1007.6 388.2L1005.2 385.8Z" fill="#4aa860" stroke="#1e7a3a" stroke-width="0.6"/><path d="M1002.6 402Q1007 402 1008.6 405Q1009.4 409.6 1008.6 411.8Q1012.8 411 1014 406.6" fill="none" stroke="#555" stroke-width="0.9"/><rect x="1006" y="402" width="3.6" height="3.6" fill="#4aa860" stroke="#1e7a3a" stroke-width="0.6"/><path d="M1003 440L1014 427" stroke="#d83040" stroke-width="1.2" stroke-dasharray="2 1"/><path d="M1004 436L1006.4 438.6M1010.8 428.4L1013 431" stroke="#d83040" stroke-width="0.9"/><circle cx="1008.4" cy="433.4" r="1.8" fill="#3a9a4a" stroke="#1e7a3a" stroke-width="0.5"/><path d="M944.8 130.6V127.6Q944.8 125.8 946.5 125.8Q948.2 125.8 948.2 127.6V130.6" fill="none" stroke="#9a9a9a" stroke-width="0.8"/><path d="M944.4 130.6H948.6" stroke="#9a9a9a" stroke-width="0.8"/><path d="M943.8 475.2L947.4 480.4L944 480.8Z" fill="#5aa46a"/><path d="M944 480.8L947.4 480.4L946.4 484Z" fill="#4a5ac8"/><path d="M947.4 480.4L950.2 481.6L946.4 484Z" fill="#c85a6a"/><path d="M943.8 475.2L947.4 480.4L950.2 481.6Z" fill="#8abf9a"/><path d="M39.2 132.8V138.6L43.4 135.4Z" fill="#222"/><path d="M957.3 293V313" stroke="#c0c0c0" stroke-width="1" stroke-dasharray="1 2.4"/><g transform="translate(0 -0.7)"><ellipse cx="152.4" cy="529.4" rx="4.3" ry="2.5" fill="#f0f0f0" stroke="#222" stroke-width="0.9"/><circle cx="152.4" cy="529.2" r="1.9" fill="#111"/><path d="M148.6 526.4L149.6 527.6M150.6 525L151.2 526.6M152.6 524.6V526.2M154.6 525L154 526.6M156.4 526.4L155.4 527.6" stroke="#222" stroke-width="0.8"/></g><g transform="translate(165 523.6) scale(1.0)"><path d="M1.6 4V2.6Q1.6 0.6 3.8 0.6Q6 0.6 6 2.6V3" fill="none" stroke="#8a8a70" stroke-width="1.1"/><rect x="0.6" y="3.8" width="6.8" height="5" rx="0.6" fill="#e6e088" stroke="#8c8c6c" stroke-width="0.8"/><rect x="3.2" y="5.4" width="1.4" height="1.8" fill="#5a5020"/></g><path d="M8.6 567.4L19.4 555" stroke="#9ab4d0" stroke-width="2.2" stroke-linecap="round"/><path d="M9 555L20 567" stroke="#d8d8d8" stroke-width="2.4" stroke-linecap="round"/><circle cx="9.4" cy="555.4" r="2.6" fill="#e4e4e4" stroke="#c4c4c4" stroke-width="0.6"/><circle cx="19.8" cy="566.6" r="2.6" fill="#e4e4e4" stroke="#c4c4c4" stroke-width="0.6"/><path d="M8 568.4L10.6 565.6" stroke="#5a8ac0" stroke-width="2.4" stroke-linecap="round"/><rect x="252.4" y="554.4" width="15.8" height="12.6" rx="1" fill="#2e3436" stroke="#888a86" stroke-width="1"/><rect x="253.6" y="555.6" width="13.4" height="9.4" fill="#1e2224"/><path d="M255.6 557.4L257.4 558.8L255.6 560.2" fill="none" stroke="#d8d8d8" stroke-width="0.7"/><path d="M258 560.4H260.4" stroke="#d8d8d8" stroke-width="0.7"/><rect x="252" y="566" width="16.6" height="1.8" fill="#9a9c98"/><path d="M505.6 552L498.2 559.8Q497.6 561 498.8 561.6L502.6 563L501 564.4L505.6 566.2L510 565L512 563.6L508.2 562.4L513.4 559.2Q513.8 558.4 513.2 557.8Z" fill="#111"/><path d="M505.6 552.6L502.4 556.6L504 556L505 557.2L506 555.6L507.2 557.4L508.4 556L509.6 558L512.4 557.8Z" fill="#a8c4e0"/><path d="M500.6 565.6Q506 564 511.4 565.6Q506 569.6 500.6 565.6Z" fill="#222"/><ellipse cx="506" cy="568.6" rx="2" ry="0.8" fill="#333"/></svg>
<div class="t" style="left:6.3px;top:435.9px;font-family:'Liberation Sans',sans-serif;font-weight:bold;font-size:19px;color:#000;letter-spacing:-0.5px">A</div>
</div></body></html>
